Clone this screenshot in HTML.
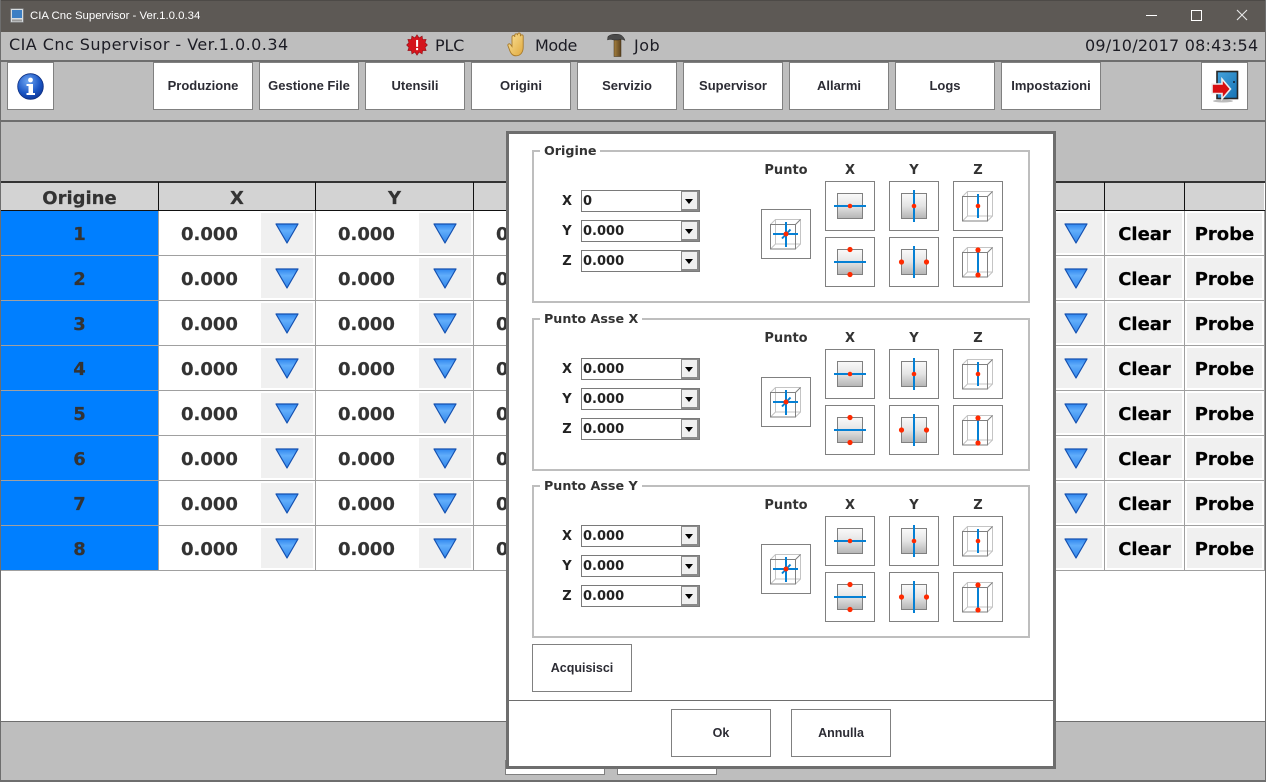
<!DOCTYPE html>
<html><head><meta charset="utf-8"><title>CIA Cnc Supervisor</title>
<style>
*{box-sizing:border-box}
html,body{margin:0;padding:0}
body{position:relative;width:1266px;height:782px;overflow:hidden;background:#fff;font-family:"DejaVu Sans","Liberation Sans",sans-serif;color:#333}
div,span,svg{position:absolute}
.bar{left:0;width:1266px}
.h{font-size:16px;line-height:28px;top:32px;color:#1c1c24;white-space:nowrap}
.b{background:#fff;border:1px solid #808080;text-align:center;font:bold 13px/46px "Liberation Sans",sans-serif;color:#2c2c34;width:100px;height:48px;top:62px}
.th{top:183px;height:27px;background:#d3d3d3;font-weight:bold;font-size:18px;line-height:31px;text-align:center;color:#333;-webkit-text-stroke:.2px #333}
.vl{width:1px;top:211px;height:360px;background:#a0a0a0}
.vk{width:1px;top:182px;height:29px;background:#111}
.r{left:0;width:1265px;height:45px;border-bottom:1px solid #a0a0a0}
.r div{top:0;height:44px;line-height:48px;font-weight:bold;font-size:18px;white-space:nowrap;-webkit-text-stroke:.2px currentColor}
.r .n{left:1px;width:157px;background:#007fff;text-align:center}
.r .v1{left:181px}.r .v2{left:338px}.r .v3{left:496px}
.r .p{top:2px;height:40px;background:#f0f0f0}
.r .p1{left:261px;width:52px}.r .p2{left:419px;width:52px}.r .p4{left:1050px;width:52px}
.r .c{left:1107px;width:75px;text-align:center;line-height:44px;color:#000}
.r .q{left:1187px;width:75px;text-align:center;line-height:44px;color:#000}
.r svg{top:12px;width:24px;height:21px}
#dlg{left:506px;top:131px;width:550px;height:638px;background:#fff;border:3px solid #6e6e6e}
.g{left:532px;width:498px;height:153px;border:2px solid #bebebe}
.lg{background:#fff;padding:0 4px;font-weight:bold;font-size:12.7px;line-height:16px;color:#333;left:6px;top:-9px;white-space:nowrap}
.w{height:160px}
.l{font-weight:bold;font-size:13px;color:#222;line-height:16px;width:14px;text-align:center;left:28px;margin-top:2px}
.cb{left:49px;width:119px;height:22px;border:1px solid #7a7a7a;background:#fff;font-weight:bold;font-size:13px;line-height:22px;padding-left:1px;color:#222}
.cb i{position:absolute;right:0;top:0;width:18px;height:20px;background:#f0f0f0;border-style:solid;border-width:1px 2px 2px 1px;border-color:#8a8a8a}
.cb i:after{content:"";position:absolute;left:3px;top:7px;border:4.5px solid transparent;border-top:5px solid #000;border-bottom:0}
.t{font-weight:bold;font-size:13px;line-height:16px;text-align:center;color:#333;top:13px;width:50px}
.d{background:#fff;border:1px solid #808080;text-align:center;font:bold 12.5px/46px "Liberation Sans",sans-serif;color:#2c2c34;width:100px;height:48px}
</style></head><body>
<svg width="0" height="0" style="left:0;top:0">
<defs>
<linearGradient id="gs" x1="0" y1="0" x2="0" y2="1"><stop offset="0" stop-color="#fafafa"/><stop offset=".5" stop-color="#e4e4e4"/><stop offset="1" stop-color="#b4b4b4"/></linearGradient>
<linearGradient id="tri" x1="0" y1="0" x2="0" y2="1"><stop offset="0" stop-color="#2f86ee"/><stop offset=".35" stop-color="#62aefb"/><stop offset="1" stop-color="#2f84ea"/></linearGradient>
<radialGradient id="ball" cx=".4" cy=".3" r=".8"><stop offset="0" stop-color="#6ea6f2"/><stop offset=".6" stop-color="#1a55c4"/><stop offset="1" stop-color="#0b2f8c"/></radialGradient>
<linearGradient id="door" x1="0" y1="0" x2="1" y2="1"><stop offset="0" stop-color="#45a3dc"/><stop offset="1" stop-color="#1572b4"/></linearGradient>
<linearGradient id="hand" x1="0" y1="0" x2="1" y2="1"><stop offset="0" stop-color="#fbe39a"/><stop offset="1" stop-color="#e0a93e"/></linearGradient>
<linearGradient id="hd" x1="0" y1="0" x2="1" y2="0"><stop offset="0" stop-color="#a5803f"/><stop offset="1" stop-color="#5c4320"/></linearGradient>
<symbol id="cube" overflow="visible"><g fill="none" stroke-width="1"><path d="M14.5 10.5H39.5V35H14.5Z M9.5 15.5L14.5 10.5 M34.5 40L39.5 35 M9.5 40L14.5 35" stroke="#c4c4c4"/><path d="M9.5 15.5H34.5V40H9.5Z M34.5 15.5L39.5 10.5" stroke="#808080"/></g></symbol>
<symbol id="bx" overflow="visible"><rect x=".5" y=".5" width="49" height="49" fill="#fff" stroke="#808080"/></symbol>
<symbol id="sq" overflow="visible"><rect x="12.5" y="12.5" width="25" height="25" fill="url(#gs)" stroke="#808080"/></symbol>
<g id="ip"><use href="#bx"/><use href="#cube"/><path d="M12 25H37M25 13V38M21 29.5L29.5 20.5" stroke="#0580d4" stroke-width="2" fill="none"/><circle cx="25" cy="25" r="2.5" fill="#ff2a00"/></g>
<g id="ix1"><use href="#bx"/><use href="#sq"/><path d="M9 25H41" stroke="#0580d4" stroke-width="2"/><circle cx="25" cy="25" r="2.3" fill="#ff2a00"/></g>
<g id="ix2"><use href="#bx"/><use href="#sq"/><path d="M9 25H41" stroke="#0580d4" stroke-width="2"/><circle cx="25" cy="12.5" r="2.6" fill="#ff2a00"/><circle cx="25" cy="37.5" r="2.6" fill="#ff2a00"/></g>
<g id="iy1"><use href="#bx"/><use href="#sq"/><path d="M25 9V41" stroke="#0580d4" stroke-width="2"/><circle cx="25" cy="25" r="2.3" fill="#ff2a00"/></g>
<g id="iy2"><use href="#bx"/><use href="#sq"/><path d="M25 9V41" stroke="#0580d4" stroke-width="2"/><circle cx="12.5" cy="25" r="2.6" fill="#ff2a00"/><circle cx="37.5" cy="25" r="2.6" fill="#ff2a00"/></g>
<g id="iz1"><use href="#bx"/><use href="#cube"/><path d="M25 13V37" stroke="#0580d4" stroke-width="2"/><circle cx="25" cy="25" r="2.3" fill="#ff2a00"/></g>
<g id="iz2"><use href="#bx"/><use href="#cube"/><path d="M25 13V38" stroke="#0580d4" stroke-width="2"/><circle cx="25" cy="13" r="2.6" fill="#ff2a00"/><circle cx="25" cy="38" r="2.6" fill="#ff2a00"/></g>
<symbol id="tr" viewBox="0 0 24 21"><path d="M1 1H23L12 20Z" fill="url(#tri)" stroke="#1450b0" stroke-width="1.2" stroke-linejoin="round"/></symbol>
<g id="grp"><use href="#ip" x="229" y="59"/><use href="#ix1" x="293" y="31"/><use href="#ix2" x="293" y="87"/><use href="#iy1" x="357" y="31"/><use href="#iy2" x="357" y="87"/><use href="#iz1" x="421" y="31"/><use href="#iz2" x="421" y="87"/></g>
</defs></svg>

<!-- title bar -->
<div class="bar" style="top:0;height:32px;background:#5d5955;border-top:1px solid #4d4a47"></div>
<svg style="left:10px;top:8px" width="15" height="16" viewBox="0 0 15 16"><rect x=".5" y=".5" width="13" height="14" rx="1" fill="#d8dde0" stroke="#7a7a7a"/><rect x="2" y="2" width="10" height="8" fill="#3c7fc4"/><rect x="2" y="11.5" width="10" height="2" fill="#999"/></svg>
<div style="left:30px;top:8px;font:11.4px/16px 'Liberation Sans',sans-serif;color:#fff;white-space:nowrap">CIA Cnc Supervisor - Ver.1.0.0.34</div>
<svg style="left:1140px;top:5px" width="120" height="22" fill="none" stroke="#fff"><path d="M6 10.5H17"/><rect x="51.5" y="5.5" width="10" height="10"/><path d="M97 5L107 15M107 5L97 15" stroke="#e8e8e8" stroke-width="1.1"/></svg>

<!-- header -->
<div class="bar" style="top:32px;height:90px;background:#bebebe"></div>
<div class="bar" style="top:60px;height:2px;background:#6e6e6e"></div>
<div class="bar" style="top:120px;height:2px;background:#6e6e6e"></div>
<div class="bar" style="top:122px;height:60px;background:#bebebe"></div>
<div class="h" style="left:9px;letter-spacing:.46px;top:31px">CIA Cnc Supervisor - Ver.1.0.0.34</div>
<svg style="left:406px;top:34px" width="22" height="22" viewBox="0 0 24 24"><path d="M12 0.8L14.3 4.2 17.6 2.3 18.2 6 22 5.9 20.8 9.4 23.4 12 20.8 14.6 22 18.1 18.2 18 17.6 21.7 14.3 19.8 12 23.2 9.7 19.8 6.4 21.7 5.8 18 2 18.1 3.2 14.6 .6 12 3.2 9.4 2 5.9 5.8 6 6.4 2.3 9.7 4.2Z" fill="#d4141c" stroke="#8e0f16" stroke-width=".6"/><rect x="11" y="6.5" width="2.2" height="7.5" fill="#fff"/><rect x="11" y="15.3" width="2.2" height="2.3" fill="#fff"/></svg>
<div class="h" style="left:435px;letter-spacing:-.2px">PLC</div>
<svg style="left:507px;top:32px" width="21" height="25" viewBox="0 0 21 25"><path d="M5 10V5a1.4 1.4 0 0 1 2.8 0V3.2a1.4 1.4 0 0 1 2.8 0V2.4a1.4 1.4 0 0 1 2.8 0V4.2a1.4 1.4 0 0 1 2.8 0V15c0 5-2.5 8.8-7 8.8-3.6 0-5-2-6.2-4.6L1 13.8c-.7-1.6 1.4-2.8 2.4-1.4L5 14.5Z" fill="url(#hand)" stroke="#a87a2a" stroke-width=".9"/></svg>
<div class="h" style="left:535px;letter-spacing:-.4px">Mode</div>
<svg style="left:606px;top:33px" width="20" height="24" viewBox="0 0 20 24"><rect x="8" y="6" width="7" height="17.5" fill="url(#hd)" stroke="#3d2c15" stroke-width=".5"/><path d="M2 3.5C5 1 9 1 13 1.5C16 2 18 4.5 19 7.5C16.5 6 14.5 6 12.5 7H8C6 6.5 3.5 6 1.5 7Z" fill="#4a4a4a" stroke="#262626" stroke-width=".5"/></svg>
<div class="h" style="left:634px;letter-spacing:.5px">Job</div>
<div class="h" style="left:1085px;letter-spacing:.22px">09/10/2017 08:43:54</div>

<div class="b" style="left:7px;width:47px"></div>
<svg style="left:17px;top:73px" width="27" height="27" viewBox="0 0 27 27"><circle cx="13.5" cy="13.5" r="12.8" fill="url(#ball)" stroke="#0d2f82" stroke-width=".8"/><circle cx="13.5" cy="7" r="2.4" fill="#fff"/><path d="M9.5 11H16V20H18V22H9.5V20H11.5V13H9.5Z" fill="#fff"/></svg>
<div class="b" style="left:153px">Produzione</div>
<div class="b" style="left:259px">Gestione File</div>
<div class="b" style="left:365px">Utensili</div>
<div class="b" style="left:471px">Origini</div>
<div class="b" style="left:577px">Servizio</div>
<div class="b" style="left:683px">Supervisor</div>
<div class="b" style="left:789px">Allarmi</div>
<div class="b" style="left:895px">Logs</div>
<div class="b" style="left:1001px">Impostazioni</div>
<div class="b" style="left:1201px;width:47px"></div>
<svg style="left:1209px;top:69px" width="32" height="34" viewBox="0 0 32 34"><ellipse cx="14" cy="32" rx="10" ry="1.5" fill="#bbb"/><rect x="8" y="2.5" width="20.5" height="27" fill="url(#door)" stroke="#262626" stroke-width="1.6"/><circle cx="25" cy="13" r="1" fill="#123"/><path d="M3 15H13V10L21.5 20 13 30V24.5H3Z" fill="#d80f12" stroke="#eee" stroke-width="1.6"/></svg>

<!-- table -->
<div class="bar" style="top:181px;height:2px;background:#333"></div>
<div class="bar" style="top:210px;height:1px;background:#111"></div>
<div class="th" style="left:1px;width:157px">Origine</div>
<div class="th" style="left:159px;width:156px">X</div>
<div class="th" style="left:316px;width:157px">Y</div>
<div class="th" style="left:474px;width:630px"></div>
<div class="th" style="left:1105px;width:79px"></div>
<div class="th" style="left:1185px;width:79px"></div>

<div class="r" style="top:211px"><div class="n">1</div><div class="v1">0.000</div><div class="p p1"></div><svg style="left:275px"><use href="#tr"/></svg><div class="v2">0.000</div><div class="p p2"></div><svg style="left:433px"><use href="#tr"/></svg><div class="v3">0.000</div><div class="p p4"></div><svg style="left:1064px"><use href="#tr"/></svg><div class="p c">Clear</div><div class="p q">Probe</div></div>
<div class="r" style="top:256px"><div class="n">2</div><div class="v1">0.000</div><div class="p p1"></div><svg style="left:275px"><use href="#tr"/></svg><div class="v2">0.000</div><div class="p p2"></div><svg style="left:433px"><use href="#tr"/></svg><div class="v3">0.000</div><div class="p p4"></div><svg style="left:1064px"><use href="#tr"/></svg><div class="p c">Clear</div><div class="p q">Probe</div></div>
<div class="r" style="top:301px"><div class="n">3</div><div class="v1">0.000</div><div class="p p1"></div><svg style="left:275px"><use href="#tr"/></svg><div class="v2">0.000</div><div class="p p2"></div><svg style="left:433px"><use href="#tr"/></svg><div class="v3">0.000</div><div class="p p4"></div><svg style="left:1064px"><use href="#tr"/></svg><div class="p c">Clear</div><div class="p q">Probe</div></div>
<div class="r" style="top:346px"><div class="n">4</div><div class="v1">0.000</div><div class="p p1"></div><svg style="left:275px"><use href="#tr"/></svg><div class="v2">0.000</div><div class="p p2"></div><svg style="left:433px"><use href="#tr"/></svg><div class="v3">0.000</div><div class="p p4"></div><svg style="left:1064px"><use href="#tr"/></svg><div class="p c">Clear</div><div class="p q">Probe</div></div>
<div class="r" style="top:391px"><div class="n">5</div><div class="v1">0.000</div><div class="p p1"></div><svg style="left:275px"><use href="#tr"/></svg><div class="v2">0.000</div><div class="p p2"></div><svg style="left:433px"><use href="#tr"/></svg><div class="v3">0.000</div><div class="p p4"></div><svg style="left:1064px"><use href="#tr"/></svg><div class="p c">Clear</div><div class="p q">Probe</div></div>
<div class="r" style="top:436px"><div class="n">6</div><div class="v1">0.000</div><div class="p p1"></div><svg style="left:275px"><use href="#tr"/></svg><div class="v2">0.000</div><div class="p p2"></div><svg style="left:433px"><use href="#tr"/></svg><div class="v3">0.000</div><div class="p p4"></div><svg style="left:1064px"><use href="#tr"/></svg><div class="p c">Clear</div><div class="p q">Probe</div></div>
<div class="r" style="top:481px"><div class="n">7</div><div class="v1">0.000</div><div class="p p1"></div><svg style="left:275px"><use href="#tr"/></svg><div class="v2">0.000</div><div class="p p2"></div><svg style="left:433px"><use href="#tr"/></svg><div class="v3">0.000</div><div class="p p4"></div><svg style="left:1064px"><use href="#tr"/></svg><div class="p c">Clear</div><div class="p q">Probe</div></div>
<div class="r" style="top:526px"><div class="n">8</div><div class="v1">0.000</div><div class="p p1"></div><svg style="left:275px"><use href="#tr"/></svg><div class="v2">0.000</div><div class="p p2"></div><svg style="left:433px"><use href="#tr"/></svg><div class="v3">0.000</div><div class="p p4"></div><svg style="left:1064px"><use href="#tr"/></svg><div class="p c">Clear</div><div class="p q">Probe</div></div>
<div class="vk" style="left:158px"></div><div class="vk" style="left:315px"></div><div class="vk" style="left:473px"></div><div class="vk" style="left:1104px"></div><div class="vk" style="left:1184px"></div>
<div class="vl" style="left:158px"></div><div class="vl" style="left:315px"></div><div class="vl" style="left:473px"></div><div class="vl" style="left:1104px"></div><div class="vl" style="left:1184px"></div><div class="vl" style="left:1264px"></div>

<!-- bottom -->
<div class="bar" style="top:721px;height:1px;background:#6e6e6e"></div>
<div class="bar" style="top:722px;height:58px;background:#bebebe"></div>
<div class="bar" style="top:780px;height:2px;background:#6e6e6e"></div>
<div style="left:505px;top:760px;width:100px;height:15px;background:#fff;border:1px solid #808080"></div>
<div style="left:617px;top:760px;width:100px;height:15px;background:#fff;border:1px solid #808080"></div>
<!-- window frame -->
<div style="left:0;top:0;width:1px;height:782px;background:#6e6e6e"></div>
<div style="left:1265px;top:0;width:1px;height:782px;background:#6e6e6e"></div>

<!-- dialog -->
<div id="dlg"></div>
<div style="left:509px;top:700px;width:544px;height:1px;background:#6e6e6e"></div>

<div class="g" style="top:150px"><div class="lg">Origine</div></div>
<div class="g" style="top:318px"><div class="lg">Punto Asse X</div></div>
<div class="g" style="top:485px"><div class="lg">Punto Asse Y</div></div>

<div class="w" style="left:532px;top:150px;width:498px">
<div class="t" style="left:229px">Punto</div><div class="t" style="left:293px">X</div><div class="t" style="left:357px">Y</div><div class="t" style="left:421px">Z</div>
<div class="l" style="top:42px">X</div><div class="cb" style="top:40px">0<i></i></div>
<div class="l" style="top:72px">Y</div><div class="cb" style="top:70px">0.000<i></i></div>
<div class="l" style="top:102px">Z</div><div class="cb" style="top:100px">0.000<i></i></div>
<svg style="left:0;top:0" width="498" height="153"><use href="#grp"/></svg>
</div>
<div class="w" style="left:532px;top:318px;width:498px">
<div class="t" style="left:229px">Punto</div><div class="t" style="left:293px">X</div><div class="t" style="left:357px">Y</div><div class="t" style="left:421px">Z</div>
<div class="l" style="top:42px">X</div><div class="cb" style="top:40px">0.000<i></i></div>
<div class="l" style="top:72px">Y</div><div class="cb" style="top:70px">0.000<i></i></div>
<div class="l" style="top:102px">Z</div><div class="cb" style="top:100px">0.000<i></i></div>
<svg style="left:0;top:0" width="498" height="153"><use href="#grp"/></svg>
</div>
<div class="w" style="left:532px;top:485px;width:498px">
<div class="t" style="left:229px">Punto</div><div class="t" style="left:293px">X</div><div class="t" style="left:357px">Y</div><div class="t" style="left:421px">Z</div>
<div class="l" style="top:42px">X</div><div class="cb" style="top:40px">0.000<i></i></div>
<div class="l" style="top:72px">Y</div><div class="cb" style="top:70px">0.000<i></i></div>
<div class="l" style="top:102px">Z</div><div class="cb" style="top:100px">0.000<i></i></div>
<svg style="left:0;top:0" width="498" height="153"><use href="#grp"/></svg>
</div>

<div class="d" style="left:532px;top:644px">Acquisisci</div>
<div class="d" style="left:671px;top:709px">Ok</div>
<div class="d" style="left:791px;top:709px">Annulla</div>
</body></html>
